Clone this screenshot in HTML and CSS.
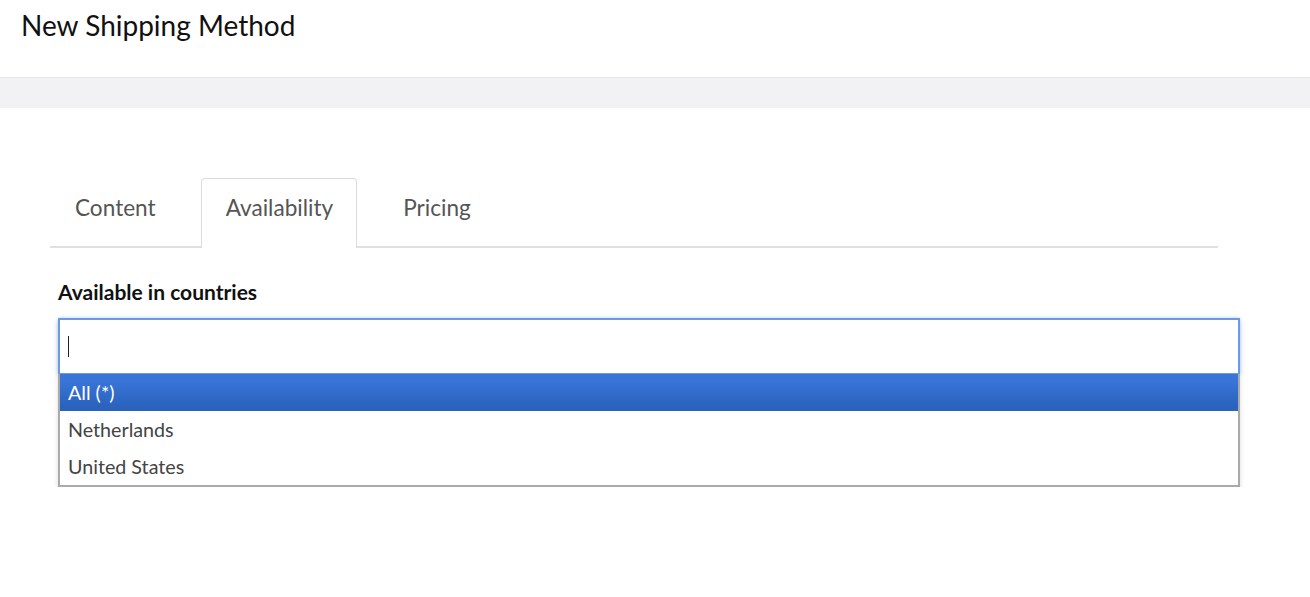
FILE: index.html
```html
<!DOCTYPE html>
<html>
<head>
<meta charset="utf-8">
<link rel="stylesheet" href="styles.css">
</head>
<body>
<header class="page-header">
  <h1 class="page-title">New Shipping Method</h1>
</header>
<div class="band"></div>
<main class="content">
  <ul class="tabs">
    <li class="tab">Content</li>
    <li class="tab active">Availability</li>
    <li class="tab">Pricing</li>
  </ul>
  <div class="form-group">
    <label class="label">Available in countries</label>
    <div class="chosen">
      <div class="search"><span class="caret"></span></div>
      <ul class="drop">
        <li class="opt hl">All (*)</li>
        <li class="opt">Netherlands</li>
        <li class="opt">United States</li>
      </ul>
    </div>
  </div>
</main>
</body>
</html>
```

FILE: styles.css
```css
* { box-sizing: border-box; }
html, body { margin: 0; padding: 0; background: #fff; }
body { font-family: Lato, "Open Sans", "Liberation Sans", sans-serif; color: #333; }

.page-header {
  height: 78px;
  border-bottom: 1px solid #e6e6e8;
  padding: 0 21px;
}
.page-title {
  margin: 0;
  padding-top: 8px;
  font-size: 28px;
  font-weight: 400;
  line-height: 34px;
  color: #111;
}
.band { height: 30px; background: #f2f2f4; }

.content { padding: 70px 0 0 50px; }

.tabs {
  display: flex;
  list-style: none;
  margin: 0;
  padding: 0;
  width: 1168px;
  border-bottom: 2px solid #e0e0e0;
}
.tab {
  padding: 14px 23px 23px 24px;
  margin-right: 21px;
  font-size: 22.6px;
  line-height: 30px;
  color: #555;
  border: 1px solid transparent;
  border-bottom: none;
  border-radius: 4px 4px 0 0;
  margin-bottom: -2px;
}
.tab.active {
  border-color: #dcdcdc;
  background: #fff;
  padding-bottom: 25px;
}

.form-group { padding: 32px 0 0 8px; }
.label {
  display: block;
  font-size: 21px;
  font-weight: 700;
  line-height: 24px;
  color: #111;
  margin-bottom: 14px;
}
.chosen {
  width: 1182px;
  box-shadow: 0 4px 5px rgba(0,0,0,0.15);
}
.search {
  height: 56px;
  border: 2px solid #6a9ae6;
  border-bottom-width: 1px;
  box-shadow: 0 0 4px rgba(80,130,220,0.35);
  padding: 16px 0 0 8px;
  background: #fff;
}
.caret {
  display: block;
  width: 1px;
  height: 21px;
  background: #222;
}
.drop {
  list-style: none;
  margin: 0;
  padding: 0;
  border: 2px solid #aaa;
  border-top: none;
  background: #fff;
}
.opt {
  height: 37px;
  line-height: 37px;
  padding-left: 8px;
  font-size: 19.7px;
  color: #444;
}
.opt.hl {
  color: #fff;
  background: #3875d7;
  background-image: linear-gradient(#3875d7 20%, #2a62bc 90%);
}
```
